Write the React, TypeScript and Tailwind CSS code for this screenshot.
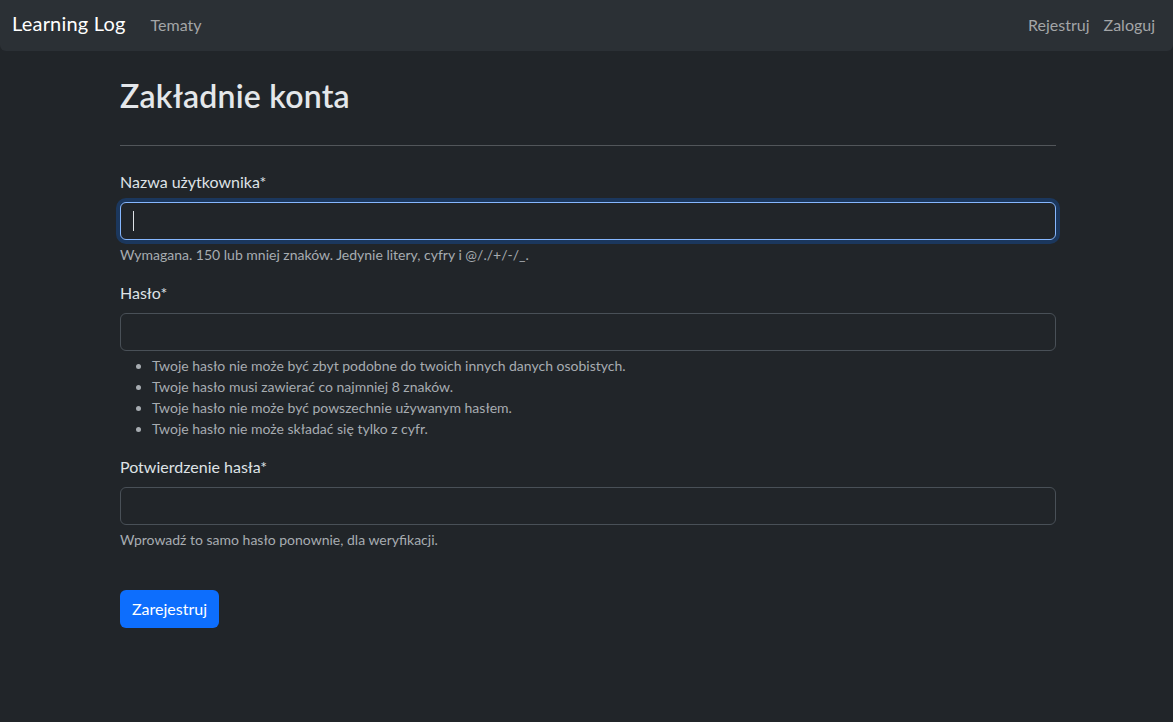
import React from 'react';

const hints = [
    'Twoje hasło nie może być zbyt podobne do twoich innych danych osobistych.',
    'Twoje hasło musi zawierać co najmniej 8 znaków.',
    'Twoje hasło nie może być powszechnie używanym hasłem.',
    'Twoje hasło nie może składać się tylko z cyfr.',
];

export default function App() {
    return (
        <div className="min-h-[722px] bg-[#212529] text-[#dee2e6] font-['Lato','Noto_Sans',sans-serif]">
            <nav className="h-[51px] bg-[#2b3035] rounded-b-md flex items-center pl-3 pr-[10px]">
                <a className="text-[20px] text-white mr-[17px] mb-[5px] tracking-[0.2px]">Learning Log</a>
                <a className="px-2 text-[16px] text-[#a3a5a7] mb-[2px]">Tematy</a>
                <div className="ml-auto flex items-center mb-[2px]">
                    <a className="pl-2 pr-[7px] text-[16px] text-[#a3a5a7]">Rejestruj</a>
                    <a className="pl-[7px] pr-2 text-[16px] text-[#a3a5a7]">Zaloguj</a>
                </div>
            </nav>

            <main className="w-[939px] mx-auto pl-[3px] pt-[26px]">
                <h2 className="text-[32px] font-semibold leading-[1.2] text-[#e4e7ea] tracking-[0.2px]">Zakładnie konta</h2>
                <hr className="mt-[30px] border-t border-[#52565a]" />

                <form className="mt-[24px]">
                    <div className="mb-4">
                        <label className="block text-[16px] mb-2">Nazwa użytkownika*</label>
                        <div className="relative">
                            <input
                                type="text"
                                className="w-full h-[38px] rounded-md bg-[#212529] border border-[#86b7fe] shadow-[0_0_0_4px_rgba(13,110,253,0.25)] outline-none px-3"
                            />
                            {/* caret */}
                            <span className="absolute left-[13px] top-[9px] w-px h-[20px] bg-[#dee2e6]" />
                        </div>
                        <p className="mt-1 text-[14px] text-[#a7acb1]">
                            Wymagana. 150 lub mniej znaków. Jedynie litery, cyfry i @/./+/-/_.
                        </p>
                    </div>

                    <div className="mb-4">
                        <label className="block text-[16px] mb-2">Hasło*</label>
                        <input
                            type="password"
                            className="w-full h-[38px] rounded-md bg-[#212529] border border-[#495057] outline-none px-3"
                        />
                        <ul className="mt-[4px] pl-8 list-disc text-[14px] leading-[21px] text-[#a7acb1] marker:text-[#a7acb1]">
                            {hints.map((h) => (
                                <li key={h}>{h}</li>
                            ))}
                        </ul>
                    </div>

                    <div className="mb-4">
                        <label className="block text-[16px] mb-2">Potwierdzenie hasła*</label>
                        <input
                            type="password"
                            className="w-full h-[38px] rounded-md bg-[#212529] border border-[#495057] outline-none px-3"
                        />
                        <p className="mt-1 text-[14px] text-[#a7acb1]">
                            Wprowadź to samo hasło ponownie, dla weryfikacji.
                        </p>
                    </div>

                    <button
                        type="button"
                        className="mt-[24px] h-[38px] px-3 rounded-md bg-[#0d6efd] text-white text-[16px]"
                    >
                        Zarejestruj
                    </button>
                </form>
            </main>
        </div>
    );
}
